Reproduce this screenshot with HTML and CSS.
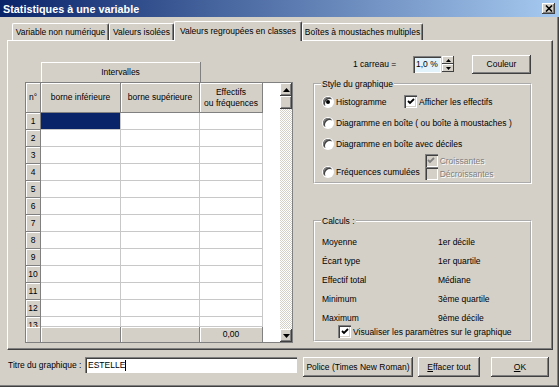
FILE: index.html
```html
<!DOCTYPE html>
<html>
<head>
    <link rel="stylesheet" href="styles.css">
    <title>Statistiques à une variable</title>
</head>
<body>
<div class="window">
    <div class="titlebar">
        <span class="title">Statistiques à une variable</span>
        <span class="close">
            <svg width="8" height="7" viewBox="0 0 8 7"><path d="M1 0.5l6 6M7 0.5l-6 6" stroke="#000" stroke-width="1.6" fill="none"/></svg>
        </span>
    </div>
    <div class="content">
        <div class="tabs">
            <div class="tab tab-1">Variable non numérique</div>
            <div class="tab tab-2">Valeurs isolées</div>
            <div class="tab tab-3 active">Valeurs regroupées en classes</div>
            <div class="tab tab-4">Boîtes à moustaches multiples</div>
        </div>
        <div class="panel">
            <div class="grid-wrap">
                <div class="grid-caption">Intervalles</div>
                <div class="grid-frame">
                    <div class="grid">
                        <div class="hd">n°</div>
                        <div class="hd">borne inférieure</div>
                        <div class="hd">borne supérieure</div>
                        <div class="hd">Effectifs<br>ou fréquences</div>

                        <div class="num">1</div><div class="cell sel"></div><div class="cell"></div><div class="cell"></div>
                        <div class="num">2</div><div class="cell"></div><div class="cell"></div><div class="cell"></div>
                        <div class="num">3</div><div class="cell"></div><div class="cell"></div><div class="cell"></div>
                        <div class="num">4</div><div class="cell"></div><div class="cell"></div><div class="cell"></div>
                        <div class="num">5</div><div class="cell"></div><div class="cell"></div><div class="cell"></div>
                        <div class="num">6</div><div class="cell"></div><div class="cell"></div><div class="cell"></div>
                        <div class="num">7</div><div class="cell"></div><div class="cell"></div><div class="cell"></div>
                        <div class="num">8</div><div class="cell"></div><div class="cell"></div><div class="cell"></div>
                        <div class="num">9</div><div class="cell"></div><div class="cell"></div><div class="cell"></div>
                        <div class="num">10</div><div class="cell"></div><div class="cell"></div><div class="cell"></div>
                        <div class="num">11</div><div class="cell"></div><div class="cell"></div><div class="cell"></div>
                        <div class="num">12</div><div class="cell"></div><div class="cell"></div><div class="cell"></div>
                        <div class="num cut">13</div><div class="cell"></div><div class="cell"></div><div class="cell"></div>

                        <div class="ft"></div><div class="ft"></div><div class="ft"></div><div class="ft">0,00</div>
                    </div>
                    <div class="blank"></div>
                    <div class="scrollbar">
                        <div class="sb-btn">
                            <svg width="7" height="4" viewBox="0 0 7 4"><path d="M3.5 0L7 4H0z" fill="#000"/></svg>
                        </div>
                        <div class="sb-btn sb-thumb"></div>
                        <div class="sb-track"></div>
                        <div class="sb-btn">
                            <svg width="7" height="4" viewBox="0 0 7 4"><path d="M0 0h7L3.5 4z" fill="#000"/></svg>
                        </div>
                    </div>
                </div>
            </div>

            <div class="side">
                <div class="scale-row">
                    <span class="scale-label">1 carreau =</span>
                    <span class="spin-input">1,0 %</span>
                    <span class="spin-btns">
                        <span class="spin-btn"><svg width="5" height="3" viewBox="0 0 5 3"><path d="M2.5 0L5 3H0z" fill="#000"/></svg></span>
                        <span class="spin-btn"><svg width="5" height="3" viewBox="0 0 5 3"><path d="M0 0h5L2.5 3z" fill="#000"/></svg></span>
                    </span>
                    <button class="btn btn-color">Couleur</button>
                </div>

                <fieldset class="group style-group">
                    <legend>Style du graphique</legend>
                    <div class="opt-row">
                        <label class="opt opt-first"><span class="radio on"></span>Histogramme</label>
                        <label class="opt"><span class="check on"><svg width="8" height="7" viewBox="0 0 8 7"><path d="M1 3l2 2 4-4" stroke="#000" stroke-width="1.8" fill="none"/></svg></span>Afficher les effectifs</label>
                    </div>
                    <div class="opt-row">
                        <label class="opt"><span class="radio"></span>Diagramme en boîte ( ou boîte à moustaches )</label>
                    </div>
                    <div class="opt-row">
                        <label class="opt"><span class="radio"></span>Diagramme en boîte avec déciles</label>
                    </div>
                    <div class="opt-row last-row">
                        <label class="opt opt-cumul"><span class="radio"></span>Fréquences cumulées</label>
                        <div class="sub-opts">
                            <label class="opt disabled"><span class="check"><svg width="8" height="7" viewBox="0 0 8 7"><path d="M1 3l2 2 4-4" stroke="#808080" stroke-width="1.8" fill="none"/></svg></span>Croissantes</label>
                            <label class="opt disabled"><span class="check"></span>Décroissantes</label>
                        </div>
                    </div>
                </fieldset>

                <fieldset class="group calc-group">
                    <legend>Calculs :</legend>
                    <div class="calc-grid">
                        <span>Moyenne</span><span>1er décile</span>
                        <span>Écart type</span><span>1er quartile</span>
                        <span>Effectif total</span><span>Médiane</span>
                        <span>Minimum</span><span>3ème quartile</span>
                        <span>Maximum</span><span>9ème décile</span>
                    </div>
                    <label class="opt calc-check"><span class="check white"><svg width="8" height="7" viewBox="0 0 8 7"><path d="M1 3l2 2 4-4" stroke="#000" stroke-width="1.8" fill="none"/></svg></span>Visualiser les paramètres sur le graphique</label>
                </fieldset>
            </div>
        </div>

        <div class="footer">
            <span class="footer-label">Titre du graphique :</span>
            <span class="text-input">ESTELLE<span class="caret"></span></span>
            <button class="btn btn-font">Police (Times New Roman)</button>
            <button class="btn btn-clear"><u>E</u>ffacer tout</button>
            <button class="btn btn-ok"><u>O</u>K</button>
        </div>
    </div>
</div>
</body>
</html>
```

FILE: styles.css
```css
*,
*::before,
*::after {
    box-sizing: border-box;
}

body {
    margin: 0;
    background: #d4d0c8;
    font-family: 'Liberation Sans', Arial, sans-serif;
    font-size: 8.5px;
    color: #000000;
}

.window {
    width: 559px;
    height: 387px;
    display: flex;
    flex-direction: column;
    background: #d4d0c8;
    box-shadow: inset -1px -1px #404040, inset -2px -2px #808080;
    overflow: hidden;
}

/* title bar */

.titlebar {
    height: 17px;
    flex: none;
    display: flex;
    align-items: center;
    justify-content: space-between;
    padding: 0 4px 0 3px;
    background: linear-gradient(to right, #0a246a, #a6caf0);
}

.title {
    color: #ffffff;
    font-weight: bold;
    font-size: 10.8px;
}

.close {
    width: 13px;
    height: 11px;
    display: flex;
    align-items: center;
    justify-content: center;
    background: #d4d0c8;
    box-shadow: inset -1px -1px #404040, inset 1px 1px #ffffff, inset -2px -2px #808080;
}

/* tabs */

.content {
    padding: 4px 0 0 7px;
    display: flex;
    flex-direction: column;
}

.tabs {
    display: flex;
    align-items: flex-end;
    height: 19px;
    padding-left: 5px;
    position: relative;
    z-index: 1;
}

.tab {
    height: 17px;
    display: flex;
    align-items: center;
    justify-content: center;
    border-top: 1px solid #ffffff;
    border-left: 1px solid #ffffff;
    border-right: 1px solid #404040;
    border-radius: 2px 2px 0 0;
    box-shadow: inset -1px 0 #808080;
    white-space: nowrap;
}

.tab.active {
    height: 20px;
    margin-bottom: -1px;
    padding-bottom: 2px;
    background: #d4d0c8;
}

.tab-1 { width: 97px; }
.tab-2 { width: 65px; }
.tab-3 { width: 128px; }
.tab-4 { width: 121px; }

.panel {
    width: 546px;
    height: 310px;
    border: 1px solid;
    border-color: #ffffff #404040 #404040 #ffffff;
    box-shadow: inset -1px -1px #808080;
    padding: 13px 0 0 17px;
    display: flex;
    align-items: flex-start;
}

/* grid */

.grid-wrap {
    width: 268px;
    margin-top: 8px;
}

.grid-caption {
    width: 160px;
    height: 20px;
    margin-left: 16px;
    display: flex;
    align-items: center;
    justify-content: center;
    border-right: 1px solid #808080;
    box-shadow: inset 1px 1px #ffffff;
}

.grid-frame {
    height: 261px;
    display: flex;
    border: 1px solid #808080;
    background: #ffffff;
}

.grid {
    display: grid;
    grid-template-columns: 15px 80px 79px 63px;
    grid-template-rows: 30px repeat(12, 17px) 10px 15px;
}

.hd,
.num,
.ft {
    display: flex;
    align-items: center;
    justify-content: center;
    text-align: center;
    background: #d4d0c8;
    border-right: 1px solid #808080;
    border-bottom: 1px solid #808080;
    box-shadow: inset 1px 1px #ffffff;
    line-height: 11px;
    overflow: hidden;
}

.num.cut {
    align-items: flex-start;
    line-height: 17px;
    border-bottom: none;
}

.ft {
    border-bottom: none;
}

.cell {
    border-right: 1px solid #c8c8c8;
    border-bottom: 1px solid #c8c8c8;
}

.cell.sel {
    background: #0a246a;
}

.blank {
    flex: 1;
}

.scrollbar {
    width: 12px;
    display: flex;
    flex-direction: column;
    background: repeating-conic-gradient(#d4d0c8 0 25%, #ffffff 0 50%) 0 0 / 2px 2px;
}

.sb-btn {
    height: 13px;
    flex: none;
    display: flex;
    align-items: center;
    justify-content: center;
    background: #d4d0c8;
    box-shadow: inset -1px -1px #404040, inset 1px 1px #ffffff, inset -2px -2px #808080;
}

.sb-track {
    flex: 1;
}

/* right side */

.side {
    width: 219px;
    margin-left: 20px;
    display: flex;
    flex-direction: column;
}

.scale-row {
    height: 20px;
    display: flex;
    align-items: center;
}

.scale-label {
    margin-left: 40px;
    width: 60px;
}

.spin-input {
    width: 28px;
    height: 17px;
    display: flex;
    align-items: center;
    padding-left: 3px;
    background: #e2f3fb;
    box-shadow: inset 1px 1px #808080, inset 2px 2px #404040, inset -1px -1px #ffffff;
}

.spin-btns {
    display: flex;
    flex-direction: column;
    margin-left: 1px;
}

.spin-btn {
    width: 12px;
    height: 8px;
    display: flex;
    align-items: center;
    justify-content: center;
    background: #d4d0c8;
    box-shadow: inset -1px -1px #404040, inset 1px 1px #ffffff;
}

.btn {
    height: 20px;
    padding: 0;
    border: none;
    background: #d4d0c8;
    font: inherit;
    color: #000000;
    box-shadow: inset -1px -1px #404040, inset 1px 1px #ffffff, inset -2px -2px #808080;
}

.btn-color {
    width: 59px;
    height: 19px;
    margin-left: 18px;
}

.group {
    margin: 0;
    border: 2px groove #ffffff;
    padding: 0 6px 2px 7px;
}

.group legend {
    padding: 0 1px;
    margin-left: -1px;
}

.style-group {
    margin-top: 5px;
    padding-top: 6px;
    display: flex;
    flex-direction: column;
    gap: 8px;
}

.opt-row {
    display: flex;
    align-items: center;
    height: 13px;
}

.opt-row.last-row {
    height: 26px;
    align-items: flex-end;
    margin-top: -4px;
}

.opt {
    display: flex;
    align-items: center;
    white-space: nowrap;
}

.opt-first {
    width: 82px;
}

.opt-cumul {
    margin-bottom: 2px;
}

.sub-opts {
    margin-left: 5px;
    display: flex;
    flex-direction: column;
}

.radio {
    width: 12px;
    height: 12px;
    margin-right: 2px;
    border-radius: 50%;
    background: #ffffff;
    box-shadow: inset 1px 1px #808080, inset 2px 2px #404040;
    border: 1px solid;
    border-color: transparent #ffffff #ffffff transparent;
    display: flex;
    align-items: center;
    justify-content: center;
}

.radio.on::after {
    content: '';
    width: 4px;
    height: 4px;
    border-radius: 50%;
    background: #000000;
}

.check {
    width: 13px;
    height: 13px;
    margin-right: 2px;
    display: flex;
    align-items: center;
    justify-content: center;
    background: #ffffff;
    box-shadow: inset 1px 1px #808080, inset 2px 2px #404040, inset -1px -1px #ffffff, inset -2px -2px #d4d0c8;
}

.disabled {
    color: #808080;
    text-shadow: 1px 1px #ffffff;
}

.disabled .check {
    background: #d4d0c8;
}

.calc-group {
    margin-top: 32px;
    padding-top: 6px;
}

.calc-grid {
    display: grid;
    grid-template-columns: 116px 1fr;
    grid-auto-rows: 19px;
    align-items: center;
}

.calc-check {
    margin: -2px 0 0 16px;
    height: 13px;
}

/* footer */

.footer {
    display: flex;
    align-items: flex-start;
    margin-top: 7px;
    padding-left: 1px;
}

.footer-label {
    width: 77px;
    line-height: 16px;
    white-space: nowrap;
}

.text-input {
    width: 212px;
    height: 16px;
    display: flex;
    align-items: center;
    padding-left: 3px;
    background: #ffffff;
    box-shadow: inset 1px 1px #808080, inset 2px 2px #404040, inset -1px -1px #ffffff;
}

.caret {
    width: 1px;
    height: 11px;
    background: #000000;
}

.btn-font {
    width: 110px;
    margin-left: 6px;
}

.btn-clear {
    width: 62px;
    margin-left: 5px;
}

.btn-ok {
    width: 58px;
    margin-left: 11px;
}
```
